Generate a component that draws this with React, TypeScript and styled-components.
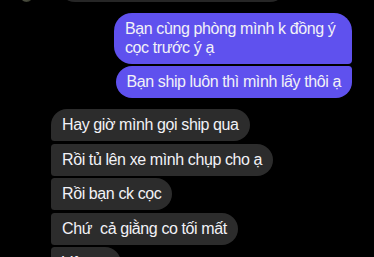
import React from "react";
import styled, { createGlobalStyle, css } from "styled-components";

const Global = createGlobalStyle`
  html, body { margin: 0; padding: 0; background: #000; }
  body { font-family: "Liberation Sans", Arial, sans-serif; }
`;

const Screen = styled.div`
  width: 374px;
  height: 257px;
  overflow: hidden;
  background: #000;
  display: flex;
  flex-direction: column;
`;

const TopRow = styled.div`
  display: flex;
  align-items: flex-end;
  margin-top: -32px;
  padding-left: 20px;
  gap: 25px;
`;

const Avatar = styled.div`
  width: 13px;
  height: 13px;
  border-radius: 50%;
  background: radial-gradient(circle at 40% 40%, #8a8f7a, #3a3d30 70%);
  flex: none;
`;

const PeekBubble = styled.div`
  width: 229px;
  height: 34px;
  border-radius: 17px;
  background: #262626;
`;

const OutGroup = styled.div`
  display: flex;
  flex-direction: column;
  align-items: flex-end;
  gap: 2.5px;
  padding-right: 22px;
  margin-top: 11px;
`;

const InRow = styled.div`
  display: flex;
  align-items: flex-end;
  margin-top: 11px;
`;

const AvatarSlot = styled.div`
  width: 51px;
  flex: none;
  display: flex;
  justify-content: center;
  align-self: stretch;
  align-items: flex-end;
`;

const BottomAvatar = styled.div`
  width: 26px;
  height: 26px;
  margin-bottom: -22px;
  margin-left: 2px;
  border-radius: 50%;
  background: radial-gradient(circle at 55% 30%, #c8c6a0 0 3px, #4d5a2c 5px, #1c2414 70%);
`;

const InGroup = styled.div`
  display: flex;
  flex-direction: column;
  align-items: flex-start;
  gap: 2.5px;
`;

type Pos = "first" | "middle" | "last";

const Bubble = styled.div<{ $out?: boolean; $pos: Pos }>`
  box-sizing: border-box;
  max-width: 238px;
  padding: 7px 11px 6.5px;
  font-size: 16px;
  line-height: 18.5px;
  letter-spacing: -0.4px;
  color: #f2f2f7;
  ${(p) =>
    p.$out
      ? css`
          background: #5f51ee;
          border-radius: ${p.$pos === "first"
            ? "18px 18px 4px 18px"
            : p.$pos === "last"
            ? "18px 4px 18px 18px"
            : "18px 4px 4px 18px"};
        `
      : css`
          background: #2c2c2c;
          border-radius: ${p.$pos === "first"
            ? "18px 18px 18px 4px"
            : p.$pos === "last"
            ? "4px 18px 18px 18px"
            : "4px 18px 18px 4px"};
        `}
`;

const outgoing = ["Bạn cùng phòng mình k đồng ý cọc trước ý ạ", "Bạn ship luôn thì mình lấy thôi ạ"];
const incoming = [
  "Hay giờ mình gọi ship qua",
  "Rồi tủ lên xe mình chụp cho ạ",
  "Rồi bạn ck cọc",
  "Chứ\u00a0 cả giằng co tối mất",
  "Vâng ạ",
];

export default function App() {
  return (
    <Screen>
      <Global />
      <TopRow>
        <Avatar />
        <PeekBubble />
      </TopRow>
      <OutGroup>
        {outgoing.map((t, i) => (
          <Bubble key={i} $out $pos={i === 0 ? "first" : "last"}>
            {t}
          </Bubble>
        ))}
      </OutGroup>
      <InRow>
        <AvatarSlot>
          <BottomAvatar />
        </AvatarSlot>
        <InGroup>
          {incoming.map((t, i) => (
            <Bubble key={i} $pos={i === 0 ? "first" : i === incoming.length - 1 ? "last" : "middle"}>
              {t}
            </Bubble>
          ))}
        </InGroup>
      </InRow>
    </Screen>
  );
}
